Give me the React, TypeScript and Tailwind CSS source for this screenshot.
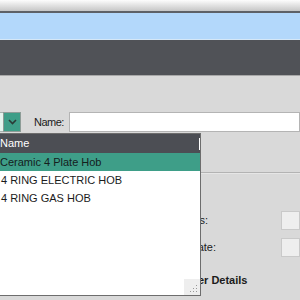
import React from "react";

const font = { fontFamily: '"Liberation Sans", Arial, sans-serif' };

export default function App() {
  return (
    <div
      className="relative w-[300px] h-[300px] overflow-hidden bg-[#d9d9d9] text-[11px] text-[#1b1b1b]"
      style={font}
    >
      {/* top chrome */}
      <div className="h-[11px] bg-gradient-to-b from-[#fdfdfd] to-[#c6c6c6]" />
      <div className="h-[2px] bg-[#5e6166]" />
      <div className="h-[26px] bg-[#b3d8fb]" />
      <div className="h-px bg-[#d5e7f6]" />
      <div className="h-[35px] bg-[#505257]" />
      <div className="h-px bg-[#a8a8a8]" />

      {/* content */}
      <div className="pt-[36px]">
        <div className="flex h-[20px] items-stretch">
          <div className="w-[3px] bg-[#e4f4ee] border-y border-[#a9b3b0]" />
          <div className="w-[18px] bg-[#3e9e88] border border-[#8d9c97] flex items-center justify-center">
            <svg width="9" height="6" viewBox="0 0 9 6">
              <path d="M1 1 L4.5 4.5 L8 1" fill="none" stroke="#2b3a36" strokeWidth="1.6" />
            </svg>
          </div>
          <div className="w-[48px] pl-[13px] flex items-center tracking-[-0.5px]">Name:</div>
          <div className="flex-1 bg-white border border-[#b4b4b4]" />
        </div>

        <div className="mt-[40px] h-px bg-[#b3b3b3]" />
        <div className="h-px bg-[#e6e6e6]" />

        <div className="mt-[37px] flex h-[19px] items-center">
          <div className="w-[208px] text-right">Hours:</div>
          <div className="ml-[73px] h-[19px] flex-1 bg-[#eeeeee] border border-[#c9c9c9]" />
        </div>
        <div className="mt-[8px] flex h-[19px] items-center">
          <div className="w-[216px] text-right">Start Date:</div>
          <div className="ml-[65px] h-[19px] flex-1 bg-[#eeeeee] border border-[#c9c9c9]" />
        </div>
        <div className="mt-[17px] pl-[157px] font-bold text-[11px] leading-[13px]">Customer Details</div>
      </div>

      {/* dropdown popup */}
      <div className="absolute left-[-4px] top-[133px] w-[205px] h-[163px] bg-white border border-[#6d6d6d]">
        <div className="relative h-[19px] bg-[#4c4e54] text-white flex items-center pl-[3px]">
          Name
          <div className="absolute right-0 top-[4px] h-[12px] w-px bg-white" />
        </div>
        <div className="h-[18px] bg-[#3e9e88] flex items-center pl-[3px] text-[#15201d]">Ceramic 4 Plate Hob</div>
        <div className="h-[18px] flex items-center pl-[4px]">4 RING ELECTRIC HOB</div>
        <div className="h-[18px] flex items-center pl-[4px]">4 RING GAS HOB</div>
        <div className="absolute right-0 bottom-0 w-[16px] h-[16px] bg-[#eeeeee]">
          <svg width="16" height="16" viewBox="0 0 16 16">
            <rect x="12" y="6" width="1" height="1" fill="#999" />
            <rect x="12" y="9" width="1" height="1" fill="#999" />
            <rect x="9" y="9" width="1" height="1" fill="#999" />
            <rect x="12" y="12" width="1" height="1" fill="#999" />
            <rect x="9" y="12" width="1" height="1" fill="#999" />
            <rect x="6" y="12" width="1" height="1" fill="#999" />
          </svg>
        </div>
      </div>
    </div>
  );
}
